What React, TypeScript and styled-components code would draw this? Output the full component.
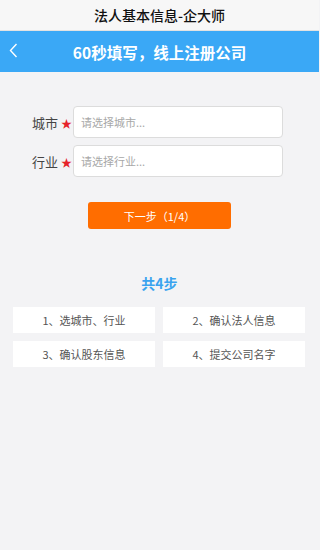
import React from "react";
import styled, { createGlobalStyle } from "styled-components";

const Global = createGlobalStyle`
  html, body { margin: 0; padding: 0; background: #f3f3f5; }
  body { font-family: "Noto Sans CJK SC", "Noto Sans", sans-serif; }
  * { box-sizing: border-box; }
`;

const Page = styled.div`
  width: 319px;
  min-height: 550px;
  background: #f3f3f5;
  display: flex;
  flex-direction: column;
`;

const TitleBar = styled.div`
  height: 31px;
  background: #f7f7f7;
  display: flex;
  align-items: center;
  justify-content: center;
  font-size: 14px;
  font-weight: 500;
  color: #111;
  border-bottom: 1px solid #e2e2e2;
`;

const NavBar = styled.div`
  height: 41px;
  background: #3aa8f6;
  display: flex;
  align-items: center;
  justify-content: center;
  position: relative;
  color: #fff;
  font-size: 15.5px;
  font-weight: 700;
`;

const Back = styled.div`
  position: absolute;
  left: 9px;
  top: 12px;
  display: flex;
`;

const Form = styled.div`
  margin-top: 34px;
  display: flex;
  flex-direction: column;
  gap: 7px;
  padding-left: 32px;
`;

const Row = styled.div`
  display: flex;
  align-items: center;
`;

const Label = styled.div`
  width: 41px;
  flex-shrink: 0;
  white-space: nowrap;
  font-size: 13px;
  color: #444;
  display: flex;
  align-items: center;
`;

const Star = styled.span`
  color: #e6232a;
  font-size: 11px;
  margin-left: 3px;
  margin-top: 1px;
`;

const Input = styled.div`
  width: 210px;
  height: 32px;
  flex-shrink: 0;
  background: #fff;
  border: 1px solid #dcdcdc;
  border-radius: 4px;
  display: flex;
  align-items: center;
  padding-left: 7px;
  font-size: 11px;
  color: #a8a8a8;
`;

const Button = styled.div`
  margin: 25px auto 0;
  width: 143px;
  height: 27px;
  background: #ff6d00;
  border-radius: 3px;
  color: #fff;
  font-size: 11px;
  display: flex;
  align-items: center;
  justify-content: center;
`;

const StepsTitle = styled.div`
  margin-top: 44px;
  text-align: center;
  color: #3aa3ef;
  font-size: 14px;
  font-weight: 700;
  line-height: 20px;
`;

const Grid = styled.div`
  margin: 14px 14px 0 13px;
  display: grid;
  grid-template-columns: 142px 142px;
  column-gap: 8px;
  row-gap: 8px;
`;

const Step = styled.div`
  height: 26px;
  background: #fff;
  display: flex;
  align-items: center;
  justify-content: center;
  font-size: 11px;
  color: #555;
`;

export default function App() {
  const steps = ["1、选城市、行业", "2、确认法人信息", "3、确认股东信息", "4、提交公司名字"];
  return (
    <Page>
      <Global />
      <TitleBar>法人基本信息-企大师</TitleBar>
      <NavBar>
        <Back>
          <svg width="9" height="15" viewBox="0 0 9 15">
            <path d="M7.5 1 L1.5 7.5 L7.5 14" fill="none" stroke="#fff" strokeWidth="1.4" />
          </svg>
        </Back>
        60秒填写，线上注册公司
      </NavBar>
      <Form>
        <Row>
          <Label>城市<Star>★</Star></Label>
          <Input>请选择城市...</Input>
        </Row>
        <Row>
          <Label>行业<Star>★</Star></Label>
          <Input>请选择行业...</Input>
        </Row>
      </Form>
      <Button>下一步（1/4）</Button>
      <StepsTitle>共4步</StepsTitle>
      <Grid>
        {steps.map((s) => (
          <Step key={s}>{s}</Step>
        ))}
      </Grid>
    </Page>
  );
}
